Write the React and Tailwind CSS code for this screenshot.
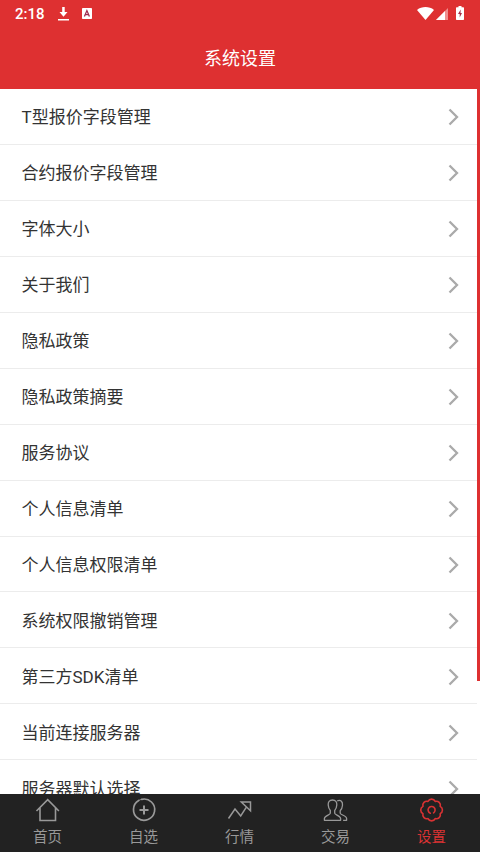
const settings = [
    "T型报价字段管理",
    "合约报价字段管理",
    "字体大小",
    "关于我们",
    "隐私政策",
    "隐私政策摘要",
    "服务协议",
    "个人信息清单",
    "个人信息权限清单",
    "系统权限撤销管理",
    "第三方SDK清单",
    "当前连接服务器",
    "服务器默认选择",
];

const StatusBar = () => (
    <div className="flex h-[27px] items-center justify-between pl-[15px] pr-[15px]">
        <div className="flex items-center">
            <span className="w-[30px] pt-px text-[15px] leading-[26px] font-medium">2:18</span>
            {/* Download */}
            <svg className="ml-[13px] h-[14px] w-[11px]" viewBox="0 0 11 14" fill="currentColor">
                <path d="M4.2 0h2.5v5h2.8L5.5 9.8 1.5 5h2.7zM0 12h11v1.6H0z" />
            </svg>
            {/* Keyboard language */}
            <svg className="ml-[13px] h-[11px] w-[10px]" viewBox="0 0 10 11">
                <rect width="10" height="11" rx="0.8" fill="currentColor" />
                <path d="M2.4 8.6 4.9 2.6 7.4 8.6M3.4 6.6h3" fill="none" stroke="#a02c50" strokeWidth="1.3" />
            </svg>
        </div>
        <div className="flex items-center">
            {/* Wifi */}
            <svg className="h-[13px] w-[17px]" viewBox="0 0 17 13" fill="currentColor">
                <path d="M0 2.9C4.8-.9 12.2-.9 17 2.9L8.5 13z" />
            </svg>
            {/* Signal */}
            <svg className="ml-[2px] h-[12px] w-[12px]" viewBox="0 0 12 12">
                <path d="M12 0v12H0z" fill="#f08e8e" />
                <path d="M9 3v9H0z" fill="currentColor" />
            </svg>
            {/* Battery */}
            <svg className="mb-[2px] ml-[8px] mr-px h-[14px] w-[8px]" viewBox="0 0 8 14">
                <path d="M2.5 0h3v1.3H7.3q.7 0 .7.7v11.3q0 .7-.7.7H.7Q0 14 0 13.3V2q0-.7.7-.7h1.8z" fill="currentColor" />
                <path d="M4.7 3.5 2 8h1.7v3.5L6 7H4.5z" fill="#a62a44" />
            </svg>
        </div>
    </div>
);

const HomeIcon = () => (
    <svg className="h-[26px] w-[26px]" viewBox="0 0 26 26" fill="none" stroke="currentColor" strokeWidth="1.6">
        <path d="M1.5 14 12.7 2.700l11.200 11.300M5 11V23.500h15.500V11" />
    </svg>
);

const AddIcon = () => (
    <svg className="h-[26px] w-[26px]" viewBox="0 0 26 26" fill="none" stroke="currentColor">
        <path d="M7.7 3.5a10.6 10.6 0 1 0 3-1.2" strokeWidth="1.7" strokeLinecap="round" />
        <path d="M10.7 2.3a10.6 10.6 0 0 0-3 1.2" strokeWidth="0.9" />
        <path d="M13 8.5v9M8.5 13h9" strokeWidth="2" />
    </svg>
);

const TrendIcon = () => (
    <svg className="h-[26px] w-[26px]" viewBox="0 0 26 26" fill="none" stroke="currentColor" strokeWidth="1.5">
        <path d="M1.500 21.500 8 12l5.700 7 6-9.300M14.300 5h9.200v8.700z" />
    </svg>
);

const TradeIcon = () => (
    <svg className="h-[26px] w-[26px]" viewBox="0 0 26 26" fill="none" stroke="currentColor" strokeWidth="1.3" strokeLinejoin="round">
        <path d="M9.500 3C6.400 3 5 5 5.200 8c.2 2.300.9 4.300 2.100 5.500v2.800c0 1.400-5.900 2.600-5.900 5.200v1.800h16.200v-1.800c0-2.600-5.900-3.800-5.900-5.200v-2.800c1.200-1.200 1.900-3.200 2.100-5.500.2-3-1.200-5-4.300-5z" />
        <path d="M14.200 3.800c3.800-1.300 5.600 1 5.300 4.400-.2 2.300-1 4.200-2.300 5.500v2.500c0 1.400 6.400 2.600 6.400 5.300v1.800h-3.500" />
    </svg>
);

const SettingsIcon = () => (
    <svg className="h-[26px] w-[26px]" viewBox="0 0 26 26" fill="none" stroke="currentColor" strokeWidth="1.6" strokeLinejoin="round">
        <path d="M9 4.400A4 4 0 0 1 16.200 4.400A4 4 0 0 1 21.200 9.400A4 4 0 0 1 21.200 16.600A4 4 0 0 1 16.200 21.600A4 4 0 0 1 9 21.600A4 4 0 0 1 4 16.600A4 4 0 0 1 4 9.400A4 4 0 0 1 9 4.400z" />
        <path d="M11.300 16.200a3.500 3.500 0 1 1 3.300-.4" strokeLinecap="round" />
    </svg>
);

const tabs = [
    { label: "首页", Icon: HomeIcon },
    { label: "自选", Icon: AddIcon },
    { label: "行情", Icon: TrendIcon },
    { label: "交易", Icon: TradeIcon },
    { label: "设置", Icon: SettingsIcon, active: true },
];

const App = () => {
    return (
        <div className="flex h-[852px] w-[480px] flex-col overflow-hidden bg-white font-['Roboto','Noto_Sans_CJK_SC',sans-serif]">
            <header className="h-[89px] shrink-0 bg-[#de3031] text-white">
                <StatusBar />
                <h1 className="pt-[18px] text-center text-[18px] leading-[27px]">系统设置</h1>
            </header>

            <main className="flex min-h-0 flex-1 overflow-hidden">
                <ul className="flex-1">
                    {settings.map((label) => (
                        <li key={label} className="flex h-[55.95px] items-center justify-between border-b border-[#ececec] pt-[2px] pl-[21.5px] pr-[18px]">
                            <span className="text-[17px] leading-[26px] text-[#333333]">{label}</span>
                            <svg className="h-[18px] w-[11px]" viewBox="0 0 11 18" fill="none" stroke="#aaaaaa" strokeWidth="2.3">
                                <path d="m1.5 1.500 7.500 7.500-7.500 7.500" />
                            </svg>
                        </li>
                    ))}
                </ul>
                {/* Scroll indicator */}
                <div className="h-[592px] w-[3px] bg-[#de3031]" />
            </main>

            <nav className="grid h-[58px] shrink-0 grid-cols-5 bg-[#222222]">
                {tabs.map(({ label, Icon, active }) => (
                    <div key={label} className={active ? "flex flex-col items-center pt-[3px] pr-px text-[#d93233]" : "flex flex-col items-center pt-[3px] pr-px text-[#999999]"}>
                        <Icon />
                        <span className="pt-[2px] text-[14.5px] leading-[26px]">{label}</span>
                    </div>
                ))}
            </nav>
        </div>
    );
};

export default App;
